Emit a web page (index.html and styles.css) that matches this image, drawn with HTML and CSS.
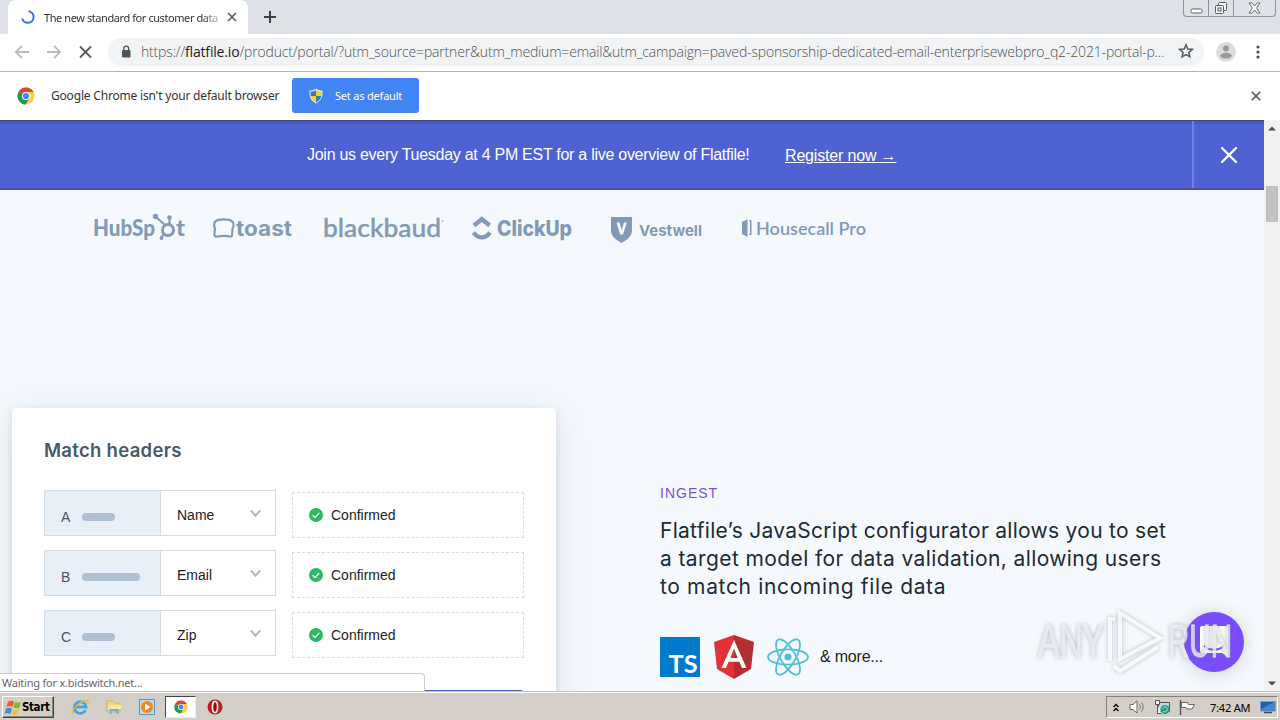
FILE: index.html
```html
<!DOCTYPE html>
<html lang="en">

<head>
  <meta charset="UTF-8">
  <meta name="viewport" content="width=device-width, initial-scale=1.0">
  <title>The new standard for customer data</title>
  <link rel="stylesheet" href="styles.css">
</head>

<body>
  <svg class="defs" width="0" height="0">
    <symbol id="chrome" viewBox="0 0 18 18">
      <circle cx="9" cy="9" r="8.5" fill="#ffcd40"/>
      <path d="M9 9L1.6 4.8A8.5 8.5 0 0 1 16.5 5H9z" fill="#de4335"/>
      <path d="M9 9L1.6 4.8A8.5 8.5 0 0 0 8.6 17.5L12.4 11z" fill="#1a9b57"/>
      <circle cx="9" cy="9" r="4" fill="#fff"/>
      <circle cx="9" cy="9" r="3.1" fill="#4285f4"/>
    </symbol>
    <symbol id="check" viewBox="0 0 14 14">
      <circle cx="7" cy="7" r="7" fill="#2db766"/>
      <path d="M3.6 7.2l2.4 2.3 4.3-4.6" fill="none" stroke="#fff" stroke-width="1.3"/>
    </symbol>
    <symbol id="chevron" viewBox="0 0 10 8">
      <path d="M.7 1.200L5 6l4.300-4.800" fill="none" stroke="#b4b7ba" stroke-width="1.8"/>
    </symbol>
  </svg>

  <header class="tabstrip">
    <div class="tab">
      <svg class="spinner" width="14" height="14" viewBox="0 0 14 14"><path d="M7.5 1.2A5.8 5.8 0 1 1 1.2 8.5" fill="none" stroke="#3b70dc" stroke-width="2"/></svg>
      <span class="tab-title">The new standard for customer data</span>
      <svg width="10" height="10" viewBox="0 0 10 10"><path d="M1 1l8 8M9 1L1 9" stroke="#5f6368" stroke-width="1.7"/></svg>
    </div>
    <svg class="new-tab" width="12" height="12" viewBox="0 0 12 12"><path d="M6 0v12M0 6h12" stroke="#3c4043" stroke-width="2"/></svg>
    <div class="window-buttons">
      <span><svg width="13" height="6" viewBox="0 0 13 6"><rect x="1" y="1" width="11" height="4" rx="1.5" fill="#fff" stroke="#575c66"/></svg></span>
      <span><svg width="14" height="14" viewBox="0 0 14 14" fill="#f4f5f7" stroke="#575c66"><rect x="4.500" y="1.500" width="8" height="8" rx="1"/><rect x="1.500" y="4.500" width="8" height="8" rx="1"/><rect x="4" y="7" width="3" height="3"/></svg></span>
      <span class="close"><svg width="13" height="12" viewBox="0 0 13 12"><path d="M1 1h3l2.500 3L9 1h3L8.500 6l3.500 5H9L6.500 8 4 11H1l3.500-5z" fill="#fff" stroke="#575c66" stroke-width=".9"/></svg></span>
    </div>
  </header>

  <div class="toolbar">
    <svg class="nav" width="80" height="16" viewBox="0 0 80 16" fill="none" stroke-width="1.8">
      <path d="M15 8H2M8 1.800L1.800 8 8 14.200M33 8h13M40 1.800L46.200 8 40 14.200" stroke="#b9bbbe"/>
      <path d="M66 2.500l11 11M77 2.500l-11 11" stroke="#55585c"/>
    </svg>
    <div class="omnibox">
      <svg width="10" height="13" viewBox="0 0 10 13"><rect x="1" y="5" width="8.500" height="7.500" rx="1" fill="#505357"/><path d="M2.800 5.500V3.500a2.400 2.400 0 0 1 4.800 0v2" fill="none" stroke="#505357" stroke-width="1.300"/></svg>
      <span class="url">https://<b>flatfile.io</b>/product/portal/?utm_source=partner&amp;utm_medium=email&amp;utm_campaign=paved-sponsorship-dedicated-email-enterprisewebpro_q2-2021-portal-p...</span>
      <svg class="star" width="16" height="16" viewBox="0 0 16 16"><path d="M8 1.800l1.800 4.200 4.500.4-3.400 3 1 4.400L8 11.500l-3.900 2.300 1-4.400-3.400-3L6.200 6z" fill="none" stroke="#55585c" stroke-width="1.500"/></svg>
    </div>
    <svg class="avatar" width="20" height="20" viewBox="0 0 20 20"><circle cx="10" cy="10" r="10" fill="#dcdcdc"/><circle cx="10" cy="6.500" r="3" fill="#999"/><ellipse cx="10" cy="13.700" rx="5.700" ry="2.900" fill="#999"/></svg>
    <svg class="dots" width="4" height="14" viewBox="0 0 4 14" fill="#4a4d51"><circle cx="2" cy="2" r="1.600"/><circle cx="2" cy="7" r="1.600"/><circle cx="2" cy="12" r="1.600"/></svg>
  </div>

  <div class="infobar">
    <svg width="18" height="18"><use href="#chrome"/></svg>
    <span class="info-text">Google Chrome isn't your default browser</span>
    <button class="default-btn">
      <svg width="14" height="16" viewBox="0 0 14 16"><path d="M7 .5c2 1.500 4 2 6.500 2 .3 6-1 10-6.500 13C1.500 12.500.2 8.500.5 2.500 3 2.500 5 2 7 .5z" fill="#dfe7ee"/><path d="M7 2v6H1.700C1.500 6.500 1.500 5 1.600 3.700 4 3.500 5.500 3 7 2zM7 8h5.300c-.6 2.900-2.300 4.900-5.300 6.400z" fill="#2f7bc4"/><path d="M7 2v6h5.300c.2-1.500.2-3 .1-4.300C10 3.500 8.500 3 7 2zM7 8H1.700c.6 2.900 2.300 4.900 5.300 6.400z" fill="#f5d22c"/></svg>
      <span>Set as default</span>
    </button>
    <svg class="info-close" width="10" height="10" viewBox="0 0 10 10"><path d="M.8.8l8.400 8.400M9.200.8L.8 9.200" stroke="#5f6368" stroke-width="1.800"/></svg>
  </div>

  <div class="viewport">
    <main class="page">
      <section class="banner">
        <p class="banner-text">Join us every Tuesday at 4 PM EST for a live overview of Flatfile!</p>
        <a class="banner-link">Register now →</a>
        <div class="banner-close"><svg width="16" height="16" viewBox="0 0 16 16"><path d="M1 1l14 14M15 1L1 15" stroke="#fff" stroke-width="2.400" stroke-linecap="round"/></svg></div>
      </section>

      <svg class="logos" width="800" height="40" viewBox="0 0 800 40" fill="#829ab7">
        <g class="hubspot">
          <text x="12" y="27" textLength="62" lengthAdjust="spacingAndGlyphs">HubSp</text>
          <text x="95" y="27" textLength="9" lengthAdjust="spacingAndGlyphs">t</text>
          <g fill="none" stroke="#829ab7" stroke-width="3"><circle cx="87" cy="21" r="5.500"/><path d="M75 8l9 8M88.500 15V8M83 25l-3 4" stroke-width="2.200"/></g>
          <circle cx="74.500" cy="7.500" r="2.700"/><circle cx="88.500" cy="8.500" r="2.300"/><circle cx="80.500" cy="29" r="1.900"/>
        </g>
        <path d="M136.500 27.500c4.500-.8 8.500-.8 12.500 0 1.200.2 2-.3 2.100-1.500l.4-6.500c2.300-3.500 1-7.800-3.500-8.700-3.500-.7-7-.7-10.500 0-4.600.9-5.300 5-3.500 8.500l-.6 6.200c-.2 1.600 1.200 2.300 3.100 2z" fill="none" stroke="#829ab7" stroke-width="2.200"/>
        <text class="toast" x="155" y="27" textLength="56" lengthAdjust="spacingAndGlyphs">toast</text>
        <text class="blackbaud" x="242" y="27.500" textLength="118" lengthAdjust="spacingAndGlyphs">blackbaud</text>
        <circle cx="361.500" cy="12" r=".8"/>
        <g fill="none" stroke="#829ab7" stroke-width="4.400"><path d="M393 16.500l7.800-6.500 7.800 6.500M392.500 23.500c4.500 6.500 12 6.500 16.500 0"/></g>
        <text class="clickup" x="416" y="27" textLength="75" lengthAdjust="spacingAndGlyphs">ClickUp</text>
        <path d="M530 8h21v14c0 5-5 9-10.500 12C535 31 530 27 530 22z"/>
        <path d="M535.500 13.500h3l2.200 7.500 2.300-7.500h2.800L542 25.500h-2.800z" fill="#f5f9fd"/>
        <text class="vestwell" x="558" y="26.500" textLength="63" lengthAdjust="spacingAndGlyphs">Vestwell</text>
        <path d="M661 13l5.500-3v18l-5.500-3zM668 11h2.500v15H668z"/><path d="M668.500 12v13" stroke="#f5f9fd"/>
        <text class="housecall" x="675" y="26" textLength="110" lengthAdjust="spacingAndGlyphs">Housecall Pro</text>
      </svg>

      <section class="feature">
        <div class="card">
          <h2>Match headers</h2>
          <div class="match-row">
            <div class="source"><span>A</span><i class="bar"></i></div>
            <div class="select"><span>Name</span><svg width="11" height="9"><use href="#chevron"/></svg></div>
            <div class="status"><svg width="14" height="14"><use href="#check"/></svg><span>Confirmed</span></div>
          </div>
          <div class="match-row">
            <div class="source"><span>B</span><i class="bar long"></i></div>
            <div class="select"><span>Email</span><svg width="11" height="9"><use href="#chevron"/></svg></div>
            <div class="status"><svg width="14" height="14"><use href="#check"/></svg><span>Confirmed</span></div>
          </div>
          <div class="match-row">
            <div class="source"><span>C</span><i class="bar"></i></div>
            <div class="select"><span>Zip</span><svg width="11" height="9"><use href="#chevron"/></svg></div>
            <div class="status"><svg width="14" height="14"><use href="#check"/></svg><span>Confirmed</span></div>
          </div>
          <div class="card-action"></div>
        </div>

        <div class="copy">
          <p class="eyebrow">INGEST</p>
          <h3><span class="l1">Flatfile’s JavaScript configurator allows you to set</span><span class="l2">a target model for data validation, allowing users</span><span class="l3">to match incoming file data</span></h3>
          <div class="tech">
            <svg width="40" height="40" viewBox="0 0 40 40"><path d="M0 0h40v40H0z" fill="#007acc"/><text class="ts" x="8.500" y="36" textLength="29" lengthAdjust="spacingAndGlyphs">TS</text></svg>
            <svg width="42" height="44" viewBox="0 0 42 44"><path d="M21 0L1 7l3 27 17 10z" fill="#e23237"/><path d="M21 0l20 7-3 27-17 10z" fill="#b52e31"/><path d="M21 5L8.500 33H13l2.600-6.300h10.800L29 33h4.500zm0 8.500l3.700 9.400h-7.400z" fill="#fff" fill-rule="evenodd"/></svg>
            <svg width="44" height="42" viewBox="0 0 44 42" fill="none" stroke="#53bfd9" stroke-width="1.800"><ellipse cx="22" cy="21" rx="20" ry="7.600"/><ellipse cx="22" cy="21" rx="20" ry="7.600" transform="rotate(60 22 21)"/><ellipse cx="22" cy="21" rx="20" ry="7.600" transform="rotate(120 22 21)"/><circle cx="22" cy="21" r="3.600" fill="#53bfd9" stroke="none"/></svg>
            <span>&amp; more...</span>
          </div>
        </div>
      </section>
      <div class="chat">
        <svg width="30" height="34" viewBox="0 0 30 34"><path d="M3 1h24q2 0 2 2v29l-6-4H3q-2 0-2-2V3q0-2 2-2z" fill="#fff"/><path d="M5 21c6 5 14 5 20 0" fill="none" stroke="#7a4dff" stroke-width="1.800"/></svg>
      </div>
    </main>

    <div class="scrollbar">
      <svg width="8" height="5" viewBox="0 0 8 5"><path d="M0 4.500L4 .5l4 4z" fill="#4c4c4c"/></svg>
      <div class="thumb"></div>
      <svg class="down" width="8" height="5" viewBox="0 0 8 5"><path d="M0 .5l4 4 4-4z" fill="#4c4c4c"/></svg>
    </div>
    <div class="status-bubble">Waiting for x.bidswitch.net...</div>
    <svg class="watermark" width="204" height="72" viewBox="0 0 204 72">
      <text x="2" y="51" textLength="66" lengthAdjust="spacingAndGlyphs">ANY</text>
      <text x="132" y="51" textLength="64" lengthAdjust="spacingAndGlyphs">RUN</text>
      <g class="mark"><path d="M84 7v46l40-21z"/><path d="M79 13h-5v42"/><path d="M78 60l6 5 38-24"/></g>
    </svg>
  </div>

  <footer class="taskbar">
    <div class="start">
      <svg width="18" height="17" viewBox="0 0 18 17"><path d="M4 3c2-2 4-1.500 6-.5L8.500 8c-2-1-4-1-6 0z" fill="#e9602c"/><path d="M11 3c2 1 4 1 6 0l-1.500 5.500c-2 1-4 1-6 0z" fill="#80b83a"/><path d="M2 9.500c2-1 4-1 6 0L6.500 15c-2-1-4-1-6 0z" fill="#3f8fd5"/><path d="M9 10c2 1 4 1 6 0l-1.500 5c-2 1.500-4 1-6 0z" fill="#f8c52f"/></svg>
      <span>Start</span>
    </div>
    <div class="quick">
      <svg width="18" height="18" viewBox="0 0 18 18" fill="none"><path d="M14.500 12A5.800 5.800 0 1 1 15 9H5" stroke="#46a7dd" stroke-width="2.800"/><path d="M2 16C-1 12 11 1 16.500 2.500c1 .5.500 2 0 3" stroke="#e8b92c" stroke-width="1.200"/></svg>
      <svg width="16" height="16" viewBox="0 0 16 16"><path d="M1 2h6l1 2h6v9H1z" fill="#f5d778" stroke="#d9b65a"/><path d="M2 6h13v4H2z" fill="#f8e8a8"/><path d="M3.500 15v-5h9v5h-2v-3h-5v3z" fill="#62b4e0"/></svg>
      <svg width="16" height="16" viewBox="0 0 16 16"><path d="M.5.5h15v15H.5z" fill="#b9d8f1" stroke="#5b93c7"/><circle cx="8" cy="8" r="6" fill="#f08a1d"/><path d="M6 4.500l5.500 3.500L6 11.500z" fill="#fff"/></svg>
      <span class="active-app"><svg width="14" height="14"><use href="#chrome"/></svg></span>
      <svg width="16" height="16" viewBox="0 0 16 16"><circle cx="8" cy="8" r="7.500" fill="#bc1c1f"/><ellipse cx="8" cy="8" rx="2.600" ry="5.600" fill="#8e1114" stroke="#f4eeea" stroke-width="1.600"/></svg>
    </div>
    <div class="tray">
      <svg width="6" height="9" viewBox="0 0 6 9"><path d="M.5 4L3 1.500 5.500 4M.5 8L3 5.500 5.500 8" fill="none" stroke="#000" stroke-width="1.300"/></svg>
      <svg width="17" height="14" viewBox="0 0 17 14"><path d="M1 4.500h3L8 1v12L4 9.500H1z" fill="#fff" stroke="#666"/><path d="M10.500 4.500q2 2.500 0 5M12.500 2.500q3.500 4.500 0 9" fill="none" stroke="#777"/></svg>
      <svg width="17" height="16" viewBox="0 0 17 16"><path d="M4.500 3.500h11v9h-11z" fill="#bcdde0" stroke="#555"/><path d="M1.500 1.500h4v4h-4zM3.500 5.500v9h4" fill="#eee" stroke="#555"/><circle cx="11" cy="10.500" r="4.500" fill="#249b88"/><path d="M8 10q3-4 5-1t-4 4" fill="none" stroke="#9de0ca"/></svg>
      <svg width="17" height="15" viewBox="0 0 17 15"><path d="M1.500 0v15" stroke="#555" stroke-width="1.400"/><path d="M2.500 2.500h6l1 2h6l-2.500 4.500H8l-1-1.500H2.500z" fill="#fff" stroke="#666"/></svg>
      <span class="clock">7:42 AM</span>
      <svg class="desk" width="16" height="13" viewBox="0 0 16 13"><path d="M.5.5h15v9.500H.5z" fill="#235fae" stroke="#7d9cc6"/><path d="M1 8L14 1h1v8.500H1z" fill="#4386d2"/><path d="M4 11.500h8" stroke="#444" stroke-width="1.500"/></svg>
    </div>
  </footer>
</body>

</html>
```
FILE: styles.css
```css
* {
  margin: 0;
  padding: 0;
  box-sizing: border-box;
}

body {
  width: 1280px;
  height: 720px;
  overflow: hidden;
  display: flex;
  flex-direction: column;
  font-family: "Liberation Sans", Arial, sans-serif;
  background: #fff;
  color: #222;
}

svg {
  display: block;
  flex: none;
}

.defs {
  position: absolute;
}

span,
p,
a {
  white-space: nowrap;
}

/* browser chrome */
.tabstrip {
  height: 34px;
  flex: none;
  display: flex;
  background: #dee1e6;
  padding-left: 8px;
}

.tab {
  width: 240px;
  height: 34px;
  background: #fff;
  border-radius: 8px 8px 0 0;
  display: flex;
  align-items: center;
  padding: 0 11px 0 13px;
}

.tab-title {
  width: 176px;
  margin: 0 7px 0 9px;
  font: 11px "Noto Sans", sans-serif;
  letter-spacing: -0.42px;
  color: #333;
  -webkit-mask-image: linear-gradient(90deg, #000 90%, rgba(0, 0, 0, 0.25));
  mask-image: linear-gradient(90deg, #000 90%, rgba(0, 0, 0, 0.25));
}

.new-tab {
  margin: 11px 0 0 16px;
}

.window-buttons {
  display: flex;
  width: 93px;
  height: 17px;
  margin: 0 4px 0 auto;
  border: 1px solid #8d929c;
  border-top: none;
  border-radius: 0 0 4px 4px;
}

.window-buttons span {
  width: 25px;
  display: flex;
  align-items: center;
  justify-content: center;
  border-right: 1px solid #8d929c;
}

.window-buttons span:first-child svg {
  margin-top: 5px;
}

.window-buttons .close {
  flex: 1;
  border: none;
}

.toolbar {
  height: 38px;
  flex: none;
  display: flex;
  align-items: center;
  padding: 0 20px 1px 14px;
  border-bottom: 1px solid #b4b5b7;
}

.omnibox {
  width: 1096px;
  height: 28px;
  margin-left: 14px;
  border-radius: 14px;
  background: #f1f3f4;
  display: flex;
  align-items: center;
  padding: 0 10px 2px 13px;
}

.url {
  margin-left: 10px;
  font: 300 14px "Open Sans", sans-serif;
  letter-spacing: -0.17px;
  color: #4f5358;
}

.url b {
  font-weight: 400;
  color: #202124;
}

.star {
  margin-left: auto;
}

.avatar {
  margin-left: 12px;
}

.dots {
  margin-left: auto;
}

.infobar {
  height: 48px;
  flex: none;
  display: flex;
  align-items: center;
  padding: 0 19px 1px 17px;
}

.info-text {
  width: 229px;
  margin: 0 12px 0 16px;
  font: 12px "Noto Sans", sans-serif;
  letter-spacing: -0.19px;
  color: #333;
}

.default-btn {
  width: 127px;
  height: 35px;
  border: none;
  border-radius: 3px;
  background: #4285f4;
  color: #fff;
  display: flex;
  align-items: center;
  padding-left: 17px;
  gap: 12px;
  font: 11px "Noto Sans", sans-serif;
  letter-spacing: -0.2px;
}

.info-close {
  margin-left: auto;
}

/* web page */
.viewport {
  position: relative;
  height: 571px;
  flex: none;
  display: flex;
}

.page {
  width: 1264px;
  overflow: hidden;
  background: #f5f9fd;
}

.banner {
  height: 70px;
  display: flex;
  align-items: center;
  background: linear-gradient(#4557ae, #4e62d1 4px, #4e62d1 60px, #5260dc);
  border-top: 1px solid #3d487e;
  border-bottom: 2px solid #4a4faf;
  color: #fff;
  font-size: 16px;
}

.banner-text {
  width: 443px;
  margin-left: 307px;
  letter-spacing: -0.27px;
}

.banner-link {
  margin: 2px 0 0 35px;
  text-decoration: underline;
  letter-spacing: -0.17px;
}

.banner-close {
  width: 72px;
  height: 100%;
  margin-left: auto;
  border-left: 2px solid #6f80e0;
  display: flex;
  align-items: center;
  justify-content: center;
}

.logos {
  margin: 19px 0 0 81px;
}

.hubspot {
  font: 900 22px Lato, sans-serif;
}

.toast {
  font: 700 21px Inter, sans-serif;
}

.blackbaud {
  font: 500 24px Lato, sans-serif;
  stroke: #829ab7;
  stroke-width: 0.4px;
}

.clickup {
  font: 800 21px Inter, sans-serif;
}

.vestwell {
  font: 700 15px Inter, sans-serif;
}

.housecall {
  font: 600 18px Lato, sans-serif;
}

.feature {
  display: flex;
  margin-top: 159px;
  padding-left: 12px;
}

.card {
  width: 544px;
  height: 400px;
  padding: 30px 32px;
  background: #fff;
  border-radius: 4px;
  box-shadow: 0 2px 6px rgba(80, 100, 115, 0.14), 0 8px 36px rgba(80, 100, 115, 0.17);
}

.card h2 {
  height: 52px;
  font: 600 18.5px/25px Inter, sans-serif;
  letter-spacing: 0.3px;
  color: #465a6b;
}

.match-row {
  display: flex;
  height: 46px;
  margin-bottom: 14px;
  font-size: 14px;
}

.source {
  width: 117px;
  display: flex;
  align-items: center;
  padding: 7px 0 0 16px;
  background: #e9eff7;
  border: 1px solid #d5dde4;
  color: #465361;
}

.source span {
  width: 21px;
}

.bar {
  width: 33px;
  height: 8px;
  border-radius: 4px;
  background: #b0bfd3;
}

.bar.long {
  width: 58px;
}

.select {
  width: 115px;
  display: flex;
  align-items: center;
  justify-content: space-between;
  padding: 3px 14px 0 16px;
  border: 1px solid #d5dbe0;
  border-left: none;
}

.select svg {
  margin-bottom: 3px;
}

.status {
  width: 232px;
  height: 46px;
  margin: 2px 0 0 16px;
  display: flex;
  align-items: center;
  gap: 8px;
  padding: 0 16px;
  border: 1px dashed #dcdfe2;
}

.card-action {
  width: 132px;
  height: 40px;
  margin: 34px 0 0 auto;
  border-radius: 4px;
  background: #5060bd;
}

.copy {
  padding: 76px 0 0 104px;
}

.eyebrow {
  font-size: 14px;
  line-height: 18px;
  letter-spacing: 1px;
  color: #7551d3;
}

.copy h3 {
  margin-top: 15px;
  font: 400 21px/28px Inter, sans-serif;
  color: #222a33;
}

.copy h3 span {
  display: block;
}

.l1 {
  letter-spacing: 0.28px;
}

.l2 {
  letter-spacing: 0.4px;
}

.l3 {
  letter-spacing: 0.65px;
}

.tech {
  display: flex;
  align-items: center;
  margin-top: 34px;
  font-size: 16px;
  letter-spacing: -0.2px;
}

.tech svg + svg {
  margin-left: 13px;
}

.tech svg:nth-of-type(3) {
  margin-left: 11px;
}

.tech span {
  margin-left: 10px;
}

.ts {
  font: 700 24px Lato, sans-serif;
  letter-spacing: 0;
  fill: #fff;
}

.chat {
  position: absolute;
  left: 1184px;
  top: 492px;
  width: 60px;
  height: 60px;
  border-radius: 50%;
  background: #7a4dff;
  box-shadow: 0 2px 18px rgba(60, 70, 90, 0.2);
  display: flex;
  align-items: center;
  justify-content: center;
}

.scrollbar {
  width: 16px;
  background: #f1f1f1;
  display: flex;
  flex-direction: column;
  align-items: center;
  padding: 6px 0 5px;
}

.thumb {
  width: 12px;
  height: 36px;
  margin-top: 55px;
  background: #c1c1c1;
}

.down {
  margin-top: auto;
}

.status-bubble {
  position: absolute;
  left: 0;
  bottom: 0;
  width: 425px;
  height: 18px;
  padding-left: 2px;
  background: #fff;
  border: 1px solid #ccc;
  border-left: none;
  border-bottom: none;
  border-radius: 0 4px 0 0;
  font: 11px/17px "Noto Sans", sans-serif;
  letter-spacing: -0.22px;
  color: #666;
}

.watermark {
  position: absolute;
  left: 1036px;
  top: 486px;
  overflow: visible;
  font: 400 47px "Liberation Sans", sans-serif;
  fill: rgba(240, 242, 245, 0.75);
  stroke: rgba(235, 238, 242, 0.65);
  stroke-width: 1.5px;
  filter: drop-shadow(0 0 2px rgba(90, 100, 110, 0.5));
}

.mark {
  fill: none;
  stroke: rgba(255, 255, 255, 0.85);
  stroke-width: 4;
}

/* desktop taskbar */
.taskbar {
  height: 29px;
  flex: none;
  display: flex;
  align-items: center;
  padding: 2px 2px 0;
  background: #d4cec8;
  border-top: 1px solid #c5c2bc;
  box-shadow: inset 0 1px #fff;
}

.start {
  width: 52px;
  height: 22px;
  display: flex;
  align-items: center;
  padding-left: 1px;
  border: 1px solid #fff;
  border-right-color: #444;
  border-bottom-color: #444;
  box-shadow: inset -1px -1px #8a8782;
  font: 700 11.5px "DejaVu Sans Condensed", "DejaVu Sans", sans-serif;
  letter-spacing: -0.4px;
  color: #000;
}

.quick {
  display: flex;
  align-items: center;
  margin-left: 17px;
}

.quick > svg + svg {
  margin-left: 17px;
}

.active-app {
  width: 31px;
  height: 22px;
  margin: 0 11px 0 10px;
  background: #fff;
  border: 1px solid #444;
  border-right-color: #eee;
  border-bottom-color: #eee;
  display: flex;
  align-items: center;
  justify-content: center;
}

.tray {
  width: 172px;
  height: 22px;
  margin-left: auto;
  display: flex;
  align-items: center;
  padding: 0 1px 0 6px;
  border: 1px solid #85817c;
  border-right-color: #fff;
  border-bottom-color: #fff;
}

.tray svg + svg {
  margin-left: 8px;
}

.tray svg:nth-of-type(2) {
  margin-left: 10px;
}

.clock {
  width: 40px;
  margin-left: 14px;
  font: 11px "Noto Sans", sans-serif;
  letter-spacing: -0.2px;
  color: #000;
}

.tray .desk {
  margin-left: auto;
}
```
